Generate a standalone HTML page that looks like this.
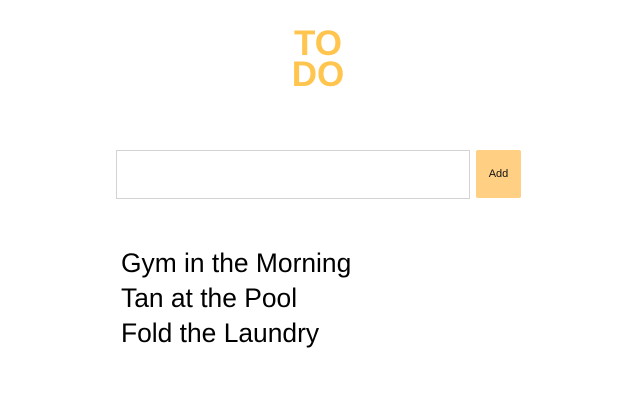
<html><head><style>
body{margin:0;width:640px;height:400px;background:#fff;font-family:"Liberation Sans",sans-serif;position:relative}
.t{position:absolute;left:0;width:636px;text-align:center;color:#ffc54f;font-weight:bold;font-size:35px;line-height:31px;top:28px}
.in{position:absolute;left:116px;top:150px;width:352px;height:47px;border:1px solid #d3d3d3;box-sizing:content-box}
.b{position:absolute;left:476px;top:150px;width:45px;height:48px;background:#ffd083;border-radius:2px;font-size:11px;line-height:48px;text-align:center;color:#111}
.l{position:absolute;left:121px;top:246px;font-size:26.4px;line-height:35px;color:#000}
</style></head><body>
<div class="t">TO<br>DO</div>
<div class="in"></div>
<div class="b">Add</div>
<div class="l">Gym in the Morning<br>Tan at the Pool<br>Fold the Laundry</div>
</body></html>
